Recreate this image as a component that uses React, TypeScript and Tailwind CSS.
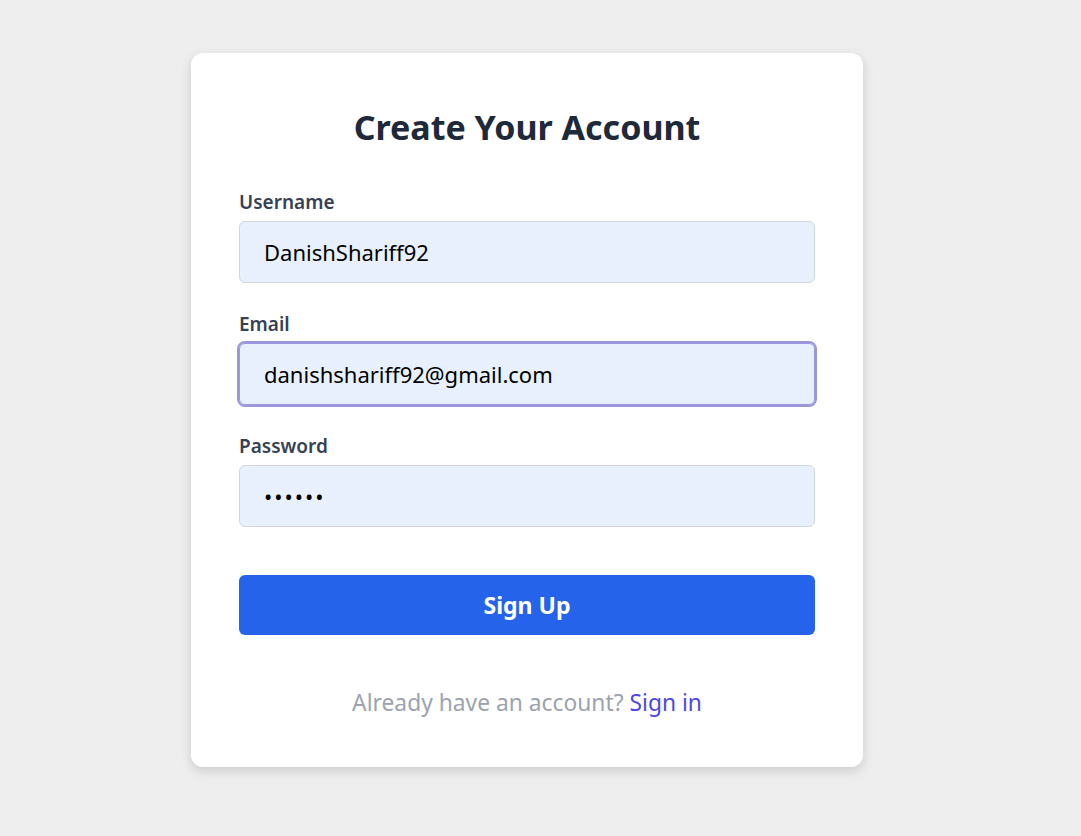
import React from "react";

const font = { fontFamily: '"Noto Sans", "Open Sans", sans-serif' };

const Field = ({
  label,
  value,
  type = "text",
  focused = false,
}: {
  label: string;
  value: string;
  type?: string;
  focused?: boolean;
}) => (
  <div className="mb-[28px]">
    <label className="mb-[6px] block text-[19px] font-semibold leading-[26px] text-gray-700">
      {label}
    </label>
    <input
      readOnly
      type={type}
      value={value}
      className={[
        "block h-[62px] w-full rounded-md border bg-[#e8f0fe] px-6 text-[22px] text-black",
        type === "password" ? "tracking-[2px]" : "",
        focused
          ? "border-[#9b97dc] outline-2 outline-[#9b97dc]"
          : "border-gray-300 outline-none",
      ].join(" ")}
    />
  </div>
);

export default function App() {
  return (
    <div className="min-h-screen bg-[#eeeeee]" style={font}>
      <div className="flex justify-center pr-[27px] pt-[53px]">
        <div className="w-[672px] rounded-xl bg-white px-12 pb-[49px] pt-[50px] shadow-[0_4px_12px_rgba(0,0,0,0.15)]">
          <h1 className="mb-[38px] text-center text-[34px] font-bold leading-[48px] text-gray-800">
            Create Your Account
          </h1>

          <Field label="Username" value="DanishShariff92" />
          <Field label="Email" value="danishshariff92@gmail.com" focused />
          <Field label="Password" value="123456" type="password" />

          <button
            type="button"
            className="mt-[48px] block h-[60px] w-full rounded-md bg-[#2563eb] text-[23px] font-bold text-white"
          >
            Sign Up
          </button>

          <p className="mt-[53px] text-center text-[22.8px] leading-[30px] text-[#9ca3af]">
            Already have an account?{" "}
            <a href="#" className="text-[#4f46e5]">
              Sign in
            </a>
          </p>
        </div>
      </div>
    </div>
  );
}
